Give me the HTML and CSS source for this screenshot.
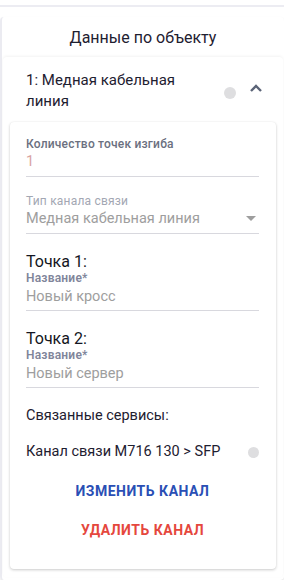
FILE: index.html
```
<!DOCTYPE html>
<html lang="ru">
<head>
<meta charset="utf-8">
<link rel="stylesheet" href="styles.css">
</head>
<body>
<div class="topbar"></div>
<div class="outer">
  <div class="title">Данные по объекту</div>
  <div class="panel">
    <div class="panel-head">
      <div class="panel-name">1: Медная кабельная линия</div>
      <span class="dot dot-head"></span>
      <svg class="chev" width="14" height="10" viewBox="0 0 14 10"><path d="M2 8 L7 3 L12 8" fill="none" stroke="#5b6477" stroke-width="2.4"/></svg>
    </div>
    <div class="card">
      <div class="field">
        <div class="label">Количество точек изгиба</div>
        <div class="value value-num">1</div>
      </div>
      <div class="field field-gap">
        <div class="label label-disabled">Тип канала связи</div>
        <div class="value select">
          <span>Медная кабельная линия</span>
          <svg class="caret" width="10" height="5" viewBox="0 0 10 5"><path d="M0 0 L10 0 L5 5 Z" fill="#9e9e9e"/></svg>
        </div>
      </div>
      <div class="point">
        <div class="point-title">Точка 1:</div>
        <div class="label label-bold">Название*</div>
        <div class="value value-pt">Новый кросс</div>
      </div>
      <div class="point">
        <div class="point-title">Точка 2:</div>
        <div class="label label-bold">Название*</div>
        <div class="value value-pt">Новый сервер</div>
      </div>
      <div class="services">Связанные сервисы:</div>
      <div class="service">
        <span>Канал связи M716 130 &gt; SFP</span>
        <span class="dot dot-svc"></span>
      </div>
      <div class="btn btn-blue">ИЗМЕНИТЬ КАНАЛ</div>
      <div class="btn btn-red">УДАЛИТЬ КАНАЛ</div>
    </div>
  </div>
</div>
</body>
</html>
```
FILE: styles.css
```
html, body {
  margin: 0;
  padding: 0;
  background: #ffffff;
  font-family: Roboto, "Noto Sans", sans-serif;
  color: #1e2030;
}
.topbar {
  height: 5px;
  border-bottom: 2px solid #ececf2;
}
.outer {
  margin-top: 10px;
  border-left: 2px solid #ebebf1;
  border-radius: 4px;
  box-shadow: 0 1px 2px rgba(0,0,0,0.12);
  padding-bottom: 3px;
}
.title {
  height: 40px;
  line-height: 40px;
  text-align: center;
  font-size: 16px;
  padding-top: 1px;
  box-sizing: border-box;
}
.panel {
  margin: 0 1px 0 1px;
  border-radius: 4px;
  box-shadow: 0 -1px 3px rgba(0,0,0,0.05);
  padding-bottom: 8px;
}
.panel-head {
  display: flex;
  align-items: center;
  padding: 13px 20px 10px 23px;
}
.panel-name {
  flex: 1;
  max-width: 172px;
  font-size: 15px;
  line-height: 21px;
}
.dot {
  display: inline-block;
  border-radius: 50%;
  background: #dedee0;
}
.dot-head {
  width: 12px;
  height: 12px;
  margin-left: auto;
  margin-top: 4px;
}
.chev {
  margin-left: 13px;
  margin-top: -7px;
}
.card {
  margin: 0 7px;
  border-radius: 4px;
  box-shadow: 0 1px 3px rgba(0,0,0,0.2), 0 0 1px rgba(0,0,0,0.08);
  padding: 14px 17px 21px 16px;
}
.field {
  border-bottom: 1px solid #d8d8de;
  padding-bottom: 4px;
}
.field-gap {
  margin-top: 16px;
}
.label {
  font-size: 12px;
  line-height: 16px;
  color: #6b7080;
  font-weight: 500;
  letter-spacing: 0.2px;
}
.label-disabled {
  color: #a3a7b3;
  font-weight: 400;
}
.label-bold {
  line-height: 12px;
  font-weight: 600;
  color: #80859a;
}
.value {
  font-size: 14.5px;
  line-height: 20px;
  color: #9e9e9e;
}
.value-num {
  color: #d9a3a3;
}
.select {
  display: flex;
  align-items: center;
  justify-content: space-between;
}
.caret {
  margin-right: 3px;
  margin-top: -2px;
}
.point {
  margin-top: 18px;
  border-bottom: 1px solid #d8d8de;
  padding-bottom: 3px;
}
.point-title {
  font-size: 16px;
  line-height: 20px;
  color: #141622;
}
.value-pt {
  margin-top: 3px;
}
.services {
  margin-top: 18px;
  font-size: 14.5px;
  line-height: 20px;
}
.service {
  margin-top: 16px;
  display: flex;
  align-items: center;
  justify-content: space-between;
  font-size: 14.5px;
  line-height: 20px;
}
.dot-svc {
  width: 11px;
  height: 11px;
  margin-right: 0;
}
.btn {
  height: 36px;
  line-height: 36px;
  text-align: center;
  font-size: 14px;
  font-weight: 700;
  letter-spacing: 0.5px;
}
.btn-blue {
  margin-top: 11px;
  color: #2a4fb5;
}
.btn-red {
  margin-top: 3px;
  color: #e5473d;
}
```
